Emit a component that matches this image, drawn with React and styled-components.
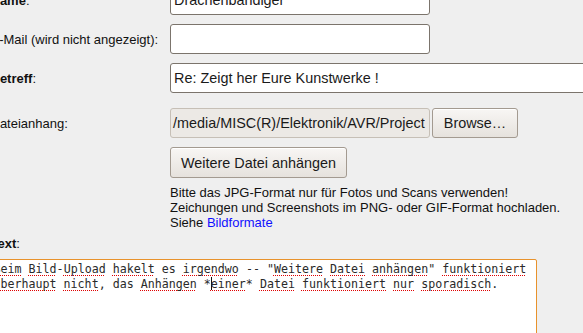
import React from 'react'
import styled, { createGlobalStyle } from 'styled-components'

const GlobalStyle = createGlobalStyle`
  html, body {
    margin: 0;
    padding: 0;
    background: #efefef;
    overflow: hidden;
  }
  body {
    font-family: "Liberation Sans", Arial, sans-serif;
    font-size: 13px;
    color: #111;
  }
`

const line1 = [
  ['Beim', true], [' '], ['Bild', true], ['-'], ['Upload', true], [' '],
  ['hakelt', true], [' es '], ['irgendwo', true], [' -- "'], ['Weitere', true],
  [' '], ['Datei', true], [' '], ['anhängen', true], ['" '], ['funktioniert', true],
]

const line2 = [
  ['überhaupt', true], [' '], ['nicht', true], [', das '], ['Anhängen', true],
  [' *'], ['caret'], ['einer', true], ['* '], ['Datei', true], [' '],
  ['funktioniert', true], [' '], ['nur', true], [' '], ['sporadisch', true], ['.'],
]

const renderLine = (parts) =>
  parts.map(([text, wrong], i) => {
    if (text === 'caret') return <Caret key={i} />
    return wrong ? <Misspelled key={i}>{text}</Misspelled> : <span key={i}>{text}</span>
  })

const App = () => (
  <>
    <GlobalStyle />
    <Page>
      <Form>
        <Label><b>Name</b>:</Label>
        <Field>
          <TextInput width={260}>Drachenbändiger</TextInput>
        </Field>

        <Label>E-Mail (wird nicht angezeigt):</Label>
        <Field>
          <TextInput width={260} />
        </Field>

        <Label><b>Betreff</b>:</Label>
        <Field>
          <TextInput width={430}>Re: Zeigt her Eure Kunstwerke !</TextInput>
        </Field>

        <Label $offset={6}>Dateianhang:</Label>
        <Field $offset={6}>
          <FileBox>/media/MISC(R)/Elektronik/AVR/Project</FileBox>
          <Button width={86}>Browse…</Button>
        </Field>

        <Spacer />
        <Field>
          <Button width={177} $tall>Weitere Datei anhängen</Button>
        </Field>

        <Spacer />
        <Note>
          Bitte das JPG-Format nur für Fotos und Scans verwenden!
          <br />
          Zeichungen und Screenshots im PNG- oder GIF-Format hochladen.
          <br />
          Siehe <Link href="#">Bildformate</Link>
        </Note>

        <TextLabel><b>Text</b>:</TextLabel>
        <Editor>
          <div>{renderLine(line1)}</div>
          <div>{renderLine(line2)}</div>
        </Editor>
      </Form>
    </Page>
  </>
)

export default App

const Page = styled.div`
  width: 583px;
  height: 333px;
  overflow: hidden;
`

const Form = styled.div`
  display: grid;
  grid-template-columns: 179.5px 1fr;
  row-gap: 9px;
  align-items: center;
  margin-left: -9.5px;
  margin-top: -15px;
`

const Label = styled.div`
  white-space: nowrap;
  line-height: 15px;
  margin-top: ${(p) => p.$offset || 0}px;
`

const Field = styled.div`
  display: flex;
  align-items: center;
  gap: 2px;
  margin-top: ${(p) => p.$offset || 0}px;
`

const Spacer = styled.div``

const TextInput = styled.div`
  box-sizing: border-box;
  width: ${(p) => p.width}px;
  flex: none;
  height: 30px;
  padding: 0 3px;
  display: flex;
  align-items: center;
  background: #fff;
  border: 1px solid #7b746c;
  border-radius: 3px;
  font-size: 14.4px;
  color: #1a1a1a;
  white-space: nowrap;
  overflow: hidden;
`

const FileBox = styled.div`
  box-sizing: border-box;
  width: 260px;
  flex: none;
  height: 30px;
  padding: 0 2px;
  display: flex;
  align-items: center;
  background: #ece9e5;
  border: 1px solid #c6bfb6;
  border-radius: 3px;
  font-size: 14.4px;
  color: #1a1a1a;
  white-space: nowrap;
  overflow: hidden;
`

const Button = styled.div`
  box-sizing: border-box;
  width: ${(p) => p.width}px;
  flex: none;
  height: ${(p) => (p.$tall ? 31 : 30)}px;
  display: flex;
  align-items: center;
  justify-content: center;
  background: linear-gradient(#f8f6f4, #e6e2dd);
  border: 1px solid #a39a90;
  border-radius: 3px;
  box-shadow: inset 0 1px 0 #fff;
  font-size: 14.4px;
  color: #1a1a1a;
  white-space: nowrap;
`

const Note = styled.div`
  grid-column: 2;
  margin-top: -2px;
  line-height: 15px;
  color: #111;
`

const Link = styled.a`
  color: #1010ff;
  text-decoration: none;
`

const TextLabel = styled.div`
  grid-column: 1 / -1;
  line-height: 15px;
  margin-top: -3px;
`

const Editor = styled.div`
  grid-column: 1 / -1;
  box-sizing: border-box;
  width: 546px;
  height: 120px;
  margin-top: -1px;
  padding: 2px 2px;
  background: #fff;
  border: 1px solid #e8922c;
  border-radius: 0 2px 0 0;
  font-family: "DejaVu Sans Mono", "Liberation Mono", monospace;
  font-size: 11.65px;
  line-height: 15px;
  color: #2a2a2a;
  white-space: pre;
`

const Misspelled = styled.span`
  text-decoration: underline dotted #e00000;
  text-decoration-thickness: 1px;
  text-underline-offset: 2px;
  text-decoration-skip-ink: none;
`

const Caret = styled.span`
  display: inline-block;
  width: 1px;
  height: 13px;
  margin-right: -1px;
  background: #111;
  vertical-align: -2px;
`
